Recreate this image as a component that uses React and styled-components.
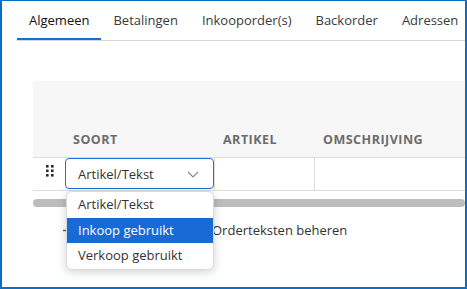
import React from 'react';
import styled, { createGlobalStyle } from 'styled-components';

const GlobalStyle = createGlobalStyle`
  html, body {
    margin: 0;
    padding: 0;
    background: #fff;
  }
  body {
    font-family: "Open Sans", "Noto Sans", sans-serif;
    color: #333;
  }
`;

const TABS = ['Algemeen', 'Betalingen', 'Inkooporder(s)', 'Backorder', 'Adressen'];
const OPTIONS = ['Artikel/Tekst', 'Inkoop gebruikt', 'Verkoop gebruikt'];

const App = () => {
  return (
    <Frame>
      <GlobalStyle />
      <TabBar>
        {TABS.map((t, i) => (
          <Tab key={t} active={i === 0}>{t}</Tab>
        ))}
      </TabBar>

      <Table>
        <HeaderRow>
          <HeadCell width={32} />
          <HeadCell width={150}>Soort</HeadCell>
          <HeadCell width={100}>Artikel</HeadCell>
          <HeadCell>Omschrijving</HeadCell>
        </HeaderRow>
        <BodyRow>
          <Cell width={32}>
            <Handle viewBox="0 0 8 12">
              {[0, 4.5, 9].map(y => (
                <g key={y}>
                  <rect x="0" y={y} width="2.6" height="2.6" />
                  <rect x="5" y={y} width="2.6" height="2.6" />
                </g>
              ))}
            </Handle>
          </Cell>
          <Cell width={150} divider>
            <SelectWrap>
              <Select>
                <span>Artikel/Tekst</span>
                <svg width="12" height="7" viewBox="0 0 12 7">
                  <path d="M1 1l5 5 5-5" fill="none" stroke="#8a8a8a" strokeWidth="1.2" />
                </svg>
              </Select>
              <Menu>
                {OPTIONS.map((o, i) => (
                  <Option key={o} selected={i === 1}>{o}</Option>
                ))}
              </Menu>
            </SelectWrap>
          </Cell>
          <Cell width={100} divider />
          <Cell />
        </BodyRow>
        <Scrollbar />
      </Table>

      <Footer>
        <AddAction>
          <svg width="9" height="9" viewBox="0 0 9 9">
            <path d="M0 4.5h9M4.5 0v9" stroke="#1a6fd4" strokeWidth="1.3" />
          </svg>
        </AddAction>
        <TextAction>Orderteksten beheren</TextAction>
      </Footer>
    </Frame>
  );
};

export default App;

const Frame = styled.div`
  box-sizing: border-box;
  width: 467px;
  height: 289px;
  border: 2px solid #0a6fc4;
  border-top-width: 1px;
  overflow: hidden;
  position: relative;
`;

const TabBar = styled.div`
  display: flex;
  margin-left: 15px;
  height: 39px;
  border-bottom: 1px solid #d6d6d6;
`;

const Tab = styled.div`
  padding: 0 12px;
  font-size: 13px;
  line-height: 39px;
  height: 39px;
  box-sizing: border-box;
  color: ${p => (p.active ? '#111' : '#3a3a3a')};
  border-bottom: 2px solid ${p => (p.active ? '#0a74da' : 'transparent')};
  margin-bottom: -1px;
  white-space: nowrap;
`;

const Table = styled.div`
  margin: 40px 0 0 31px;
`;

const HeaderRow = styled.div`
  display: flex;
  align-items: flex-end;
  height: 76px;
  background: #f7f7f7;
  border-bottom: 1px solid #dcdcdc;
`;

const HeadCell = styled.div`
  flex: ${p => (p.width ? `0 0 ${p.width}px` : '1')};
  box-sizing: border-box;
  padding: 0 8px 9px;
  font-size: 12.5px;
  font-weight: 700;
  letter-spacing: 0.5px;
  text-transform: uppercase;
  color: #6c6c6c;
  white-space: nowrap;
`;

const BodyRow = styled.div`
  display: flex;
  height: 32px;
  border-bottom: 1px solid #dcdcdc;
`;

const Cell = styled.div`
  flex: ${p => (p.width ? `0 0 ${p.width}px` : '1')};
  box-sizing: border-box;
  display: flex;
  align-items: center;
  justify-content: ${p => (p.width === 32 ? 'center' : 'flex-start')};
  border-right: ${p => (p.divider ? '1px solid #dcdcdc' : 'none')};
`;

const Handle = styled.svg`
  width: 8px;
  height: 12px;
  fill: #2b2b2b;
  margin-top: -6px;
  margin-left: 2px;
`;

const SelectWrap = styled.div`
  position: relative;
  width: 149px;
  height: 100%;
`;

const Select = styled.div`
  box-sizing: border-box;
  height: 31px;
  border: 1px solid #1a73e0;
  border-radius: 4px;
  display: flex;
  align-items: center;
  justify-content: space-between;
  padding: 0 14px 0 12px;
  font-size: 13px;
  color: #333;

  svg {
    margin-top: 1px;
  }
`;

const Menu = styled.div`
  position: absolute;
  top: 33px;
  left: 1px;
  width: 148px;
  box-sizing: border-box;
  background: #fff;
  border: 1px solid #d9d9d9;
  border-radius: 6px;
  box-shadow: 0 2px 10px rgba(0, 0, 0, 0.18);
  overflow: hidden;
  z-index: 10;
`;

const Option = styled.div`
  height: 25.5px;
  line-height: 25.5px;
  padding: 0 11px;
  font-size: 13px;
  color: ${p => (p.selected ? '#fff' : '#333')};
  background: ${p => (p.selected ? '#1a6ad6' : 'transparent')};
  white-space: nowrap;
`;

const Scrollbar = styled.div`
  margin-top: 8px;
  height: 8px;
  border-radius: 4px;
  background: #bdbdbd;
`;

const Footer = styled.div`
  display: flex;
  align-items: center;
  margin: 14px 0 0 61px;
  font-size: 13px;
`;

const AddAction = styled.div`
  flex: 0 0 149px;
  display: flex;
  align-items: center;
`;

const TextAction = styled.div`
  color: #333;
  white-space: nowrap;
`;
